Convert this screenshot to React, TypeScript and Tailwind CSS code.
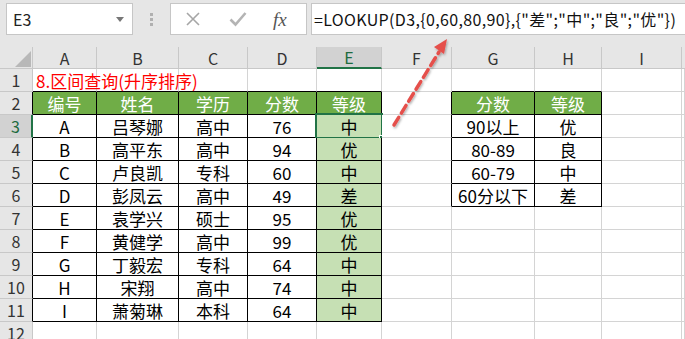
import React from "react";

const FONT = { fontFamily: '"Noto Sans CJK SC", "Liberation Sans", sans-serif' };

type Cell = { t?: string; kind?: "h" | "d" | "g" | "title" };

const letters = ["A", "B", "C", "D", "E", "F", "G", "H", "I"];

const dataRows: string[][] = [
  ["A", "吕琴娜", "高中", "76", "中"],
  ["B", "高平东", "高中", "94", "优"],
  ["C", "卢良凯", "专科", "60", "中"],
  ["D", "彭凤云", "高中", "49", "差"],
  ["E", "袁学兴", "硕士", "95", "优"],
  ["F", "黄健学", "高中", "99", "优"],
  ["G", "丁毅宏", "专科", "64", "中"],
  ["H", "宋翔", "高中", "74", "中"],
  ["I", "萧菊琳", "本科", "64", "中"],
];

const lookup: string[][] = [
  ["90以上", "优"],
  ["80-89", "良"],
  ["60-79", "中"],
  ["60分以下", "差"],
];

function buildRow(r: number): Cell[] {
  const cells: Cell[] = Array.from({ length: 10 }, () => ({}));
  if (r === 1) {
    cells[0] = { t: "8.区间查询(升序排序)", kind: "title" };
  } else if (r === 2) {
    ["编号", "姓名", "学历", "分数", "等级"].forEach((t, i) => (cells[i] = { t, kind: "h" }));
    cells[6] = { t: "分数", kind: "h" };
    cells[7] = { t: "等级", kind: "h" };
  } else if (r >= 3 && r <= 11) {
    const d = dataRows[r - 3];
    d.forEach((t, i) => (cells[i] = { t, kind: i === 4 ? "g" : "d" }));
    if (r <= 6) {
      cells[6] = { t: lookup[r - 3][0], kind: "d" };
      cells[7] = { t: lookup[r - 3][1], kind: "d" };
    }
  }
  return cells;
}

function inTable(r: number, c: number) {
  if (r >= 2 && r <= 11 && c >= 0 && c <= 4) return true;
  if (r >= 2 && r <= 6 && (c === 6 || c === 7)) return true;
  return false;
}

function DataCell({ r, c, cell }: { r: number; c: number; cell: Cell }) {
  const me = inTable(r, c);
  const rightBlack = me || inTable(r, c + 1);
  const bottomBlack = me || inTable(r + 1, c);
  const isTitle = cell.kind === "title";
  const bg =
    cell.kind === "h"
      ? "bg-[#70ad47] text-white"
      : cell.kind === "g"
      ? "bg-[#c6e0b4] text-black"
      : isTitle
      ? "bg-white text-[#ff0000] z-10"
      : "bg-white text-black";
  const isSel = r === 3 && c === 4;
  return (
    <div
      className={`relative flex items-center ${isTitle ? "justify-start overflow-visible whitespace-nowrap" : "justify-center"} ${bg} border-r border-b ${rightBlack ? "border-r-black" : "border-r-[#d4d4d4]"} ${bottomBlack ? "border-b-black" : "border-b-[#d4d4d4]"} text-[17px] leading-none`}
    >
      <span className={isTitle ? "absolute left-[3px] text-[#ff0000]" : ""}>{cell.t}</span>
      {isSel && (
        <>
          <div className="absolute left-[-2px] top-[-2px] right-[-2px] bottom-[-2px] border-2 border-[#217346] pointer-events-none" />
          <div className="absolute right-[-5px] bottom-[-5px] w-[7px] h-[7px] bg-[#217346] border border-white" />
        </>
      )}
    </div>
  );
}

export default function App() {
  const rows = Array.from({ length: 12 }, (_, i) => i + 1);
  return (
    <div className="relative w-[685px] h-[339px] overflow-hidden bg-[#e6e6e6]" style={FONT}>
      {/* Formula toolbar */}
      <div className="h-[47px] flex items-start pt-[3px]">
        <div className="ml-[6px] w-[127px] h-[32px] bg-white border border-[#c6c6c6] flex items-center pl-[6px] pr-[8px] text-[16px] text-[#222]">
          <span className="flex-1">E3</span>
          <svg width="8" height="5" viewBox="0 0 8 5">
            <polygon points="0,0 8,0 4,5" fill="#777" />
          </svg>
        </div>
        <div className="w-[37px] h-[32px] flex flex-col items-center justify-center gap-[2px]">
          <div className="w-[3px] h-[3px] bg-[#b0b0b0]" />
          <div className="w-[3px] h-[3px] bg-[#b0b0b0]" />
          <div className="w-[3px] h-[3px] bg-[#b0b0b0]" />
        </div>
        <div className="w-[137px] h-[32px] bg-white border border-[#c6c6c6] flex items-center">
          <svg className="ml-[14px]" width="16" height="16" viewBox="0 0 16 16">
            <path d="M2 2 L14 14 M14 2 L2 14" stroke="#a6a6a6" strokeWidth="1.6" fill="none" />
          </svg>
          <svg className="ml-[28px]" width="18" height="16" viewBox="0 0 18 16">
            <path d="M1.5 8.5 L6.5 13.5 L16.5 2" stroke="#b4b4b4" strokeWidth="2.6" fill="none" />
          </svg>
          <span
            className="ml-[26px] text-[19px] italic text-[#555] leading-none"
            style={{ fontFamily: '"Liberation Serif", "DejaVu Serif", serif' }}
          >
            <i>f</i>x
          </span>
        </div>
        <div className="ml-[4px] flex-1 h-[32px] bg-white border border-[#c6c6c6] border-r-0 flex items-center pl-[2px] text-[16px] tracking-[0.35px] text-[#111] whitespace-nowrap">
          =LOOKUP(D3,{"{"}0,60,80,90{"}"},{"{"}"差";"中";"良";"优"{"}"})
        </div>
      </div>

      {/* Grid */}
      <div className="grid grid-cols-[33px_64px_82px_69px_69px_65px_70px_83px_67px_80px_1fr] grid-rows-[22px_repeat(12,23px)]">
        <div className="relative bg-[#e6e6e6] border-r border-b border-[#c8c8c8]">
          <svg className="absolute left-[15px] top-[4px]" width="16" height="16" viewBox="0 0 16 16">
            <polygon points="16,0 16,16 0,16" fill="#b8b8b8" />
          </svg>
        </div>
        {letters.map((l, i) => (
          <div
            key={l}
            className={`flex items-center justify-center text-[16px] leading-none border-r border-[#c8c8c8] ${i === 4 ? "bg-[#d2d2d2] text-[#1e6b3f] border-b-2 border-b-[#217346]" : "bg-[#e6e6e6] text-[#333] border-b border-b-[#c8c8c8]"}`}
          >
            {l}
          </div>
        ))}
        <div className="bg-[#e6e6e6] border-b border-[#c8c8c8]" />

        {rows.map((r) => {
          const cells = r <= 11 ? buildRow(r) : Array.from({ length: 10 }, () => ({} as Cell));
          const hdrRightBlack = r >= 2 && r <= 11;
          return (
            <React.Fragment key={r}>
              <div
                className={`flex items-center justify-center text-[16px] leading-none border-b border-b-[#c8c8c8] ${r === 3 ? "bg-[#d2d2d2] text-[#1e6b3f] border-r-2 border-r-[#217346]" : `bg-[#e6e6e6] text-[#333] border-r ${hdrRightBlack ? "border-r-black" : "border-r-[#c8c8c8]"}`}`}
              >
                {r}
              </div>
              {cells.map((cell, c) => (
                <DataCell key={c} r={r} c={c} cell={cell} />
              ))}
            </React.Fragment>
          );
        })}
      </div>

      {/* Arrow annotation */}
      <svg className="absolute left-0 top-0 pointer-events-none" width="685" height="339" viewBox="0 0 685 339">
        <defs>
          <filter id="sh" x="-20%" y="-20%" width="140%" height="140%">
            <feDropShadow dx="1" dy="1.5" stdDeviation="1" floodColor="#000" floodOpacity="0.3" />
          </filter>
        </defs>
        <g filter="url(#sh)">
          <line
            x1="394"
            y1="125"
            x2="439"
            y2="52"
            stroke="#e5504b"
            strokeWidth="3.5"
            strokeDasharray="9 5"
            strokeLinecap="round"
          />
          <polygon points="447,39 434,47 444,54" fill="#e5504b" />
        </g>
      </svg>
    </div>
  );
}
